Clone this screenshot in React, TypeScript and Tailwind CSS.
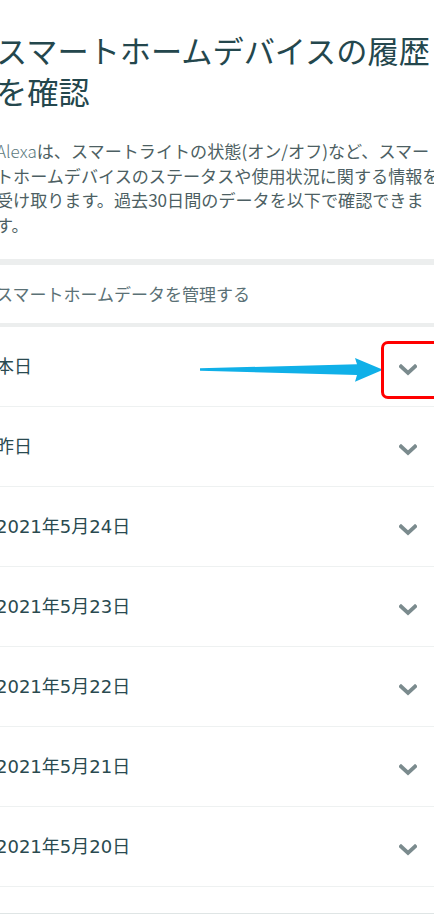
import React from "react";

const rows = [
  "本日",
  "昨日",
  "2021年5月24日",
  "2021年5月23日",
  "2021年5月22日",
  "2021年5月21日",
  "2021年5月20日",
];

function Chevron() {
  return (
    <svg width="18" height="12" viewBox="0 0 18 12" className="shrink-0 mt-[8px]">
      <path d="M2 2.5 L9 9 L16 2.5" fill="none" stroke="#7b8b8e" strokeWidth="3.8" strokeLinecap="square" />
    </svg>
  );
}

export default function App() {
  return (
    <div
      className="relative w-[434px] h-[918px] overflow-hidden bg-white"
      style={{ fontFamily: '"Noto Sans CJK JP", "Noto Sans", sans-serif' }}
    >
      <div className="ml-[-4px] w-[442px]">
        <h1 className="pt-[29px] text-[31.2px] leading-[41px] font-normal text-[#24474d] whitespace-nowrap">
          スマートホームデバイスの履歴
          <br />
          を確認
        </h1>
        <p className="mt-[28px] text-[17.1px] leading-[24.7px] text-[#4d5f63] whitespace-nowrap">
          <span className="text-[#5d7a80] font-light">Alexa</span>は、スマートライトの状態(オン/オフ)など、スマー
          <br />
          トホームデバイスのステータスや使用状況に関する情報を
          <br />
          受け取ります。過去30日間のデータを以下で確認できま
          <br />
          す。
        </p>
        <div className="mt-[21px] h-[6px] bg-[#eceeee]" />
        <div className="h-[58px] flex items-center text-[17px] text-[#5b7176]">
          スマートホームデータを管理する
        </div>
        <div className="h-[4px] bg-[#eceeee]" />
        {rows.map((r) => (
          <div
            key={r}
            className="h-[80px] flex items-center justify-between pr-[21px] border-b border-[#eef1f1] text-[18px] text-[#2a4a50]"
            style={{ fontFamily: '"DejaVu Sans", "Noto Sans CJK JP", sans-serif' }}
          >
            <span>{r}</span>
            <Chevron />
          </div>
        ))}
        <div className="h-[26px]" />
        <div className="h-[1px] bg-[#dfe5e5]" />
      </div>

      <svg className="absolute left-0 top-0 pointer-events-none" width="434" height="918">
        <path
          d="M200 368.3 L357 364.2 L355 358 L383 369.8 L355 381.8 L357 375 L200 370.7 Z"
          fill="#10b0e8"
        />
      </svg>
      <div className="absolute left-[381px] top-[341px] w-[70px] h-[58px] border-[3px] border-[#ff0000] rounded-[7px]" />
    </div>
  );
}
